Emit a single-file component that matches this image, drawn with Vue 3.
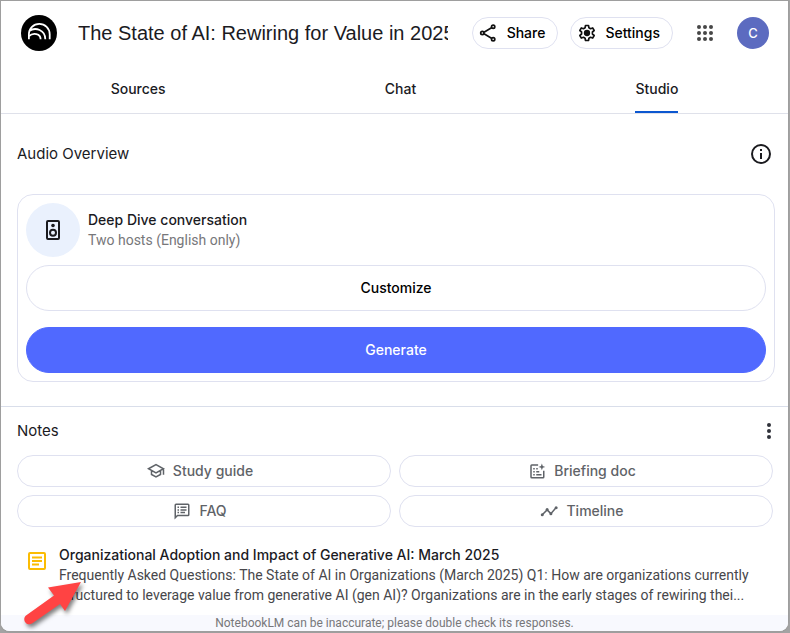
<script setup>
import { ref } from 'vue'

const tabs = ['Sources', 'Chat', 'Studio']
const active = ref('Studio')
const title = 'The State of AI: Rewiring for Value in 2025'
</script>

<template>
  <div class="window">
    <header class="topbar">
      <a class="logo" href="#" aria-label="NotebookLM home">
        <svg viewBox="0 0 36 36" width="36" height="36" aria-hidden="true">
          <circle cx="18" cy="18" r="18" fill="#000" />
          <g fill="none" stroke="#fff" stroke-width="1.8">
            <path d="M7.900 24.200v-5a10.400 10.400 0 0 1 20.800 0v5" />
            <path d="M8.200 16c6.300-4.500 16.100-.8 16.100 8.200" />
            <path d="M7.900 21.200c4.300-4.200 11.700-2.400 11.700 3" />
          </g>
        </svg>
      </a>
      <h1 class="title">{{ title }}</h1>
      <button class="pill" type="button">
        <svg viewBox="0 0 24 24" width="20" height="20" aria-hidden="true">
          <g fill="none" stroke="#111" stroke-width="2">
            <path d="M6 11l9.500-5.500M6 13l9.500 5.500" />
            <circle cx="4" cy="12" r="2" />
            <circle cx="17" cy="4.500" r="2" />
            <circle cx="17" cy="19.500" r="2" />
          </g>
        </svg>
        <span>Share</span>
      </button>
      <button class="pill" type="button">
        <svg viewBox="0 0 24 24" width="20" height="20" aria-hidden="true">
          <path fill="none" stroke="#111" stroke-width="2" stroke-linejoin="round" d="M10.200 3h3.600l.5 2.700 1.900 1.100 2.600-.9 1.800 3.100-2.100 1.800v2.400l2.100 1.800-1.800 3.100-2.600-.9-1.900 1.100-.5 2.700h-3.600l-.5-2.700-1.900-1.100-2.600.9L3.400 15l2.100-1.800v-2.400L3.400 9l1.800-3.100 2.600.9 1.900-1.100z" />
          <circle cx="12" cy="12" r="3.800" fill="#111" />
        </svg>
        <span>Settings</span>
      </button>
      <button class="apps" type="button" aria-label="Google apps">
        <svg viewBox="0 0 16 16" width="16" height="16" aria-hidden="true">
          <g fill="#474747">
            <template v-for="y in 3" :key="y">
              <circle v-for="x in 3" :key="x" :cx="x * 6 - 4" :cy="y * 6 - 4" r="2" />
            </template>
          </g>
        </svg>
      </button>
      <button class="avatar" type="button" aria-label="Account">C</button>
    </header>

    <nav class="tabs" role="tablist">
      <button
        v-for="tab in tabs"
        :key="tab"
        class="tab"
        :class="{ active: tab === active }"
        type="button"
        role="tab"
        :aria-selected="tab === active"
        @click="active = tab"
      >{{ tab }}</button>
    </nav>

    <main>
      <section class="audio">
        <div class="heading">
          <h2>Audio Overview</h2>
          <button class="icon-button" type="button" aria-label="About audio overviews">
            <svg viewBox="0 0 20 20" width="20" height="20" aria-hidden="true">
              <circle cx="10" cy="10" r="9" fill="none" stroke="#1b1b1f" stroke-width="2" />
              <path d="M9 9h2v6H9zM9 5h2v2H9z" fill="#1b1b1f" />
            </svg>
          </button>
        </div>
        <div class="card">
          <div class="host">
            <div class="disc">
              <svg viewBox="0 0 16 20" width="16" height="20" aria-hidden="true">
                <rect x="2" y="1" width="12" height="18" rx="1" fill="none" stroke="#1b1b1f" stroke-width="2" />
                <circle cx="8" cy="5.500" r="1.800" fill="#1b1b1f" />
                <circle cx="8" cy="12.800" r="3" fill="none" stroke="#1b1b1f" stroke-width="2" />
              </svg>
            </div>
            <div>
              <h3>Deep Dive conversation</h3>
              <p class="muted">Two hosts (English only)</p>
            </div>
          </div>
          <button class="wide" type="button">Customize</button>
          <button class="wide primary" type="button">Generate</button>
        </div>
      </section>

      <section class="notes">
        <div class="heading">
          <h2>Notes</h2>
          <button class="icon-button more" type="button" aria-label="More options">
            <svg viewBox="0 0 4 16" width="4" height="16" aria-hidden="true">
              <g fill="#30323a"><circle cx="2" cy="2" r="2" /><circle cx="2" cy="8" r="2" /><circle cx="2" cy="14" r="2" /></g>
            </svg>
          </button>
        </div>
        <div class="tools">
          <button class="tool" type="button">
            <svg viewBox="0 0 24 24" width="18" height="18" aria-hidden="true">
              <path fill="none" stroke="#5f6368" stroke-width="2" d="M2 9l10-5.500L22 9l-10 5.500zM6 11.500v5.200l6 3.300 6-3.300v-5.200M22 9v8" />
            </svg>
            <span>Study guide</span>
          </button>
          <button class="tool" type="button">
            <svg viewBox="0 0 24 24" width="18" height="18" aria-hidden="true">
              <path fill="none" stroke="#5f6368" stroke-width="2" d="M13.500 4H5a1 1 0 0 0-1 1v15a1 1 0 0 0 1 1h15a1 1 0 0 0 1-1v-8.500" />
              <path fill="#5f6368" d="M7 8h2v2H7zM7 12h2v2H7zM7 16h2v2H7zM11 12h4v2h-4zM11 16h7v2h-7zM11 8h2v2h-2zM18.500 2l1.200 3.300L23 6.500l-3.300 1.200L18.500 11l-1.200-3.300L14 6.500l3.300-1.200z" />
            </svg>
            <span>Briefing doc</span>
          </button>
          <button class="tool" type="button">
            <svg viewBox="0 0 24 24" width="18" height="18" aria-hidden="true">
              <path fill="none" stroke="#5f6368" stroke-width="2" d="M3 21V4a1 1 0 0 1 1-1h16a1 1 0 0 1 1 1v13a1 1 0 0 1-1 1H6z" />
              <path fill="#5f6368" d="M6 6h2v2H6zM6 9.500h2v2H6zM6 13h2v2H6zM10 6h8v2h-8zM10 9.500h8v2h-8zM10 13h6v2h-6z" />
            </svg>
            <span>FAQ</span>
          </button>
          <button class="tool" type="button">
            <svg viewBox="0 0 24 24" width="18" height="18" aria-hidden="true">
              <path fill="none" stroke="#5f6368" stroke-width="2" d="M3 17l6.500-6.500 5 5L21 8" />
              <g fill="#5f6368"><circle cx="3" cy="17" r="2" /><circle cx="9.500" cy="10" r="2" /><circle cx="14.500" cy="15.500" r="2" /><circle cx="21.500" cy="7.500" r="2" /></g>
            </svg>
            <span>Timeline</span>
          </button>
        </div>
        <article class="note">
          <svg class="note-icon" viewBox="0 0 20 20" width="20" height="20" aria-hidden="true">
            <rect x="2" y="2" width="16" height="16" rx="1" fill="none" stroke="#fbbc04" stroke-width="2" />
            <path d="M5 6.500h10M5 10h10M5 13.500h7" stroke="#fbbc04" stroke-width="2" />
          </svg>
          <div class="note-body">
            <h3>Organizational Adoption and Impact of Generative AI: March 2025</h3>
            <p class="excerpt">Frequently Asked Questions: The State of AI in Organizations (March 2025) Q1: How are organizations currently structured to leverage value from generative AI (gen AI)? Organizations are in the early stages of rewiring thei...</p>
          </div>
          <svg class="arrow" viewBox="0 0 64 52" width="64" height="52" aria-hidden="true">
            <path d="M60 4L27 9.500l6 8L5 37.500c-4.500 4 .5 11 6 8L39 26l5 7z" fill="#ff4343" />
          </svg>
        </article>
      </section>
    </main>
    <footer>NotebookLM can be inaccurate; please double check its responses.</footer>
  </div>
</template>

<style>
body {
  background: #a3a3a3;
}
</style>

<style scoped>
.window {
  box-sizing: border-box;
  margin: 0 1px 0 0;
  min-height: 100vh;
  display: flex;
  flex-direction: column;
  border: 1px solid #9e9e9e;
  border-bottom-width: 2px;
  border-radius: 0 0 10px 10px;
  overflow: hidden;
  background: #fff;
  color: #1b1b1f;
  font: 14px/20px Inter, Roboto, sans-serif;
}
button {
  font: inherit;
  color: inherit;
  background: none;
  border: 0;
  padding: 0;
  margin: 0;
  cursor: pointer;
}
svg {
  display: block;
  flex: none;
}
h1, h2, h3, p {
  margin: 0;
}
h2 {
  font-size: 15px;
  font-weight: 400;
}
h3 {
  font-size: 14px;
  font-weight: 500;
}
.topbar {
  display: flex;
  align-items: center;
  height: 64px;
  padding: 0 19px 0 20px;
}
.title {
  flex: 1;
  min-width: 0;
  margin: 0 24px 0 21px;
  overflow: hidden;
  white-space: nowrap;
  font: 400 20px/28px "Liberation Sans", Arial, sans-serif;
}
.pill {
  box-sizing: border-box;
  display: flex;
  align-items: center;
  gap: 8px;
  height: 32px;
  padding: 0 12px 0 6px;
  margin-right: 12px;
  border: 1px solid #dfe1f0;
  border-radius: 16px;
  font-weight: 500;
  color: #000;
}
.apps {
  padding: 0 12px;
  margin-right: 12px;
}
.avatar {
  width: 32px;
  height: 32px;
  border-radius: 50%;
  background: #5c6bc0;
  color: #fff;
  font-size: 13px;
  font-weight: 500;
}
.tabs {
  display: flex;
  justify-content: space-around;
  height: 48px;
  border-bottom: 1px solid #dfe1ea;
}
.tab {
  font-weight: 500;
  border-top: 2px solid transparent;
  border-bottom: 2px solid transparent;
}
.tab.active {
  border-bottom-color: #0b57d0;
}
.audio {
  padding: 24px 13px 24px 16px;
  border-bottom: 1px solid #d9deea;
}
.heading {
  display: flex;
  align-items: center;
  justify-content: space-between;
  height: 32px;
}
.audio .heading {
  padding-right: 4px;
  margin-bottom: 24px;
}
.card {
  border: 1px solid #dfe1f0;
  border-radius: 16px;
  padding: 8px;
}
.host {
  display: flex;
  align-items: center;
  gap: 8px;
  margin-bottom: 8px;
}
.disc {
  width: 54px;
  height: 54px;
  display: flex;
  align-items: center;
  justify-content: center;
  border-radius: 50%;
  background: #eaf1fd;
}
.muted,
.excerpt,
footer {
  font-family: Roboto, sans-serif;
}
.muted {
  color: #77777a;
}
.wide {
  box-sizing: border-box;
  display: block;
  width: 100%;
  height: 46px;
  border: 1px solid #dfe1f0;
  border-radius: 23px;
  font-weight: 500;
  color: #000;
}
.wide.primary {
  margin-top: 16px;
  border-color: #5069ff;
  background: #5069ff;
  color: #fff;
}
.notes {
  padding: 8px 15px 8px 16px;
}
.more {
  padding: 8px 2px;
}
.tools {
  display: grid;
  grid-template-columns: 1fr 1fr;
  gap: 8px;
  margin-top: 8px;
}
.tool {
  box-sizing: border-box;
  display: flex;
  align-items: center;
  justify-content: center;
  gap: 8px;
  height: 32px;
  padding-right: 8px;
  border: 1px solid #dfe1f0;
  border-radius: 16px;
  font-weight: 500;
  color: #5f6368;
}
.note {
  position: relative;
  display: flex;
  gap: 12px;
  margin-top: 18px;
  padding: 0 8px 0 10px;
}
.note-icon {
  margin-top: 6px;
}
.note-body {
  min-width: 0;
}
.excerpt {
  color: #47474b;
}
.arrow {
  position: absolute;
  left: 4px;
  top: 33px;
  overflow: visible;
  filter: drop-shadow(2px 3px 2px rgba(0, 0, 0, 0.5));
}
main {
  position: relative;
  z-index: 1;
}
footer {
  margin-top: auto;
  background: #f8f9fe;
  color: #77777a;
  font-size: 12px;
  line-height: 16px;
  text-align: center;
}
</style>
